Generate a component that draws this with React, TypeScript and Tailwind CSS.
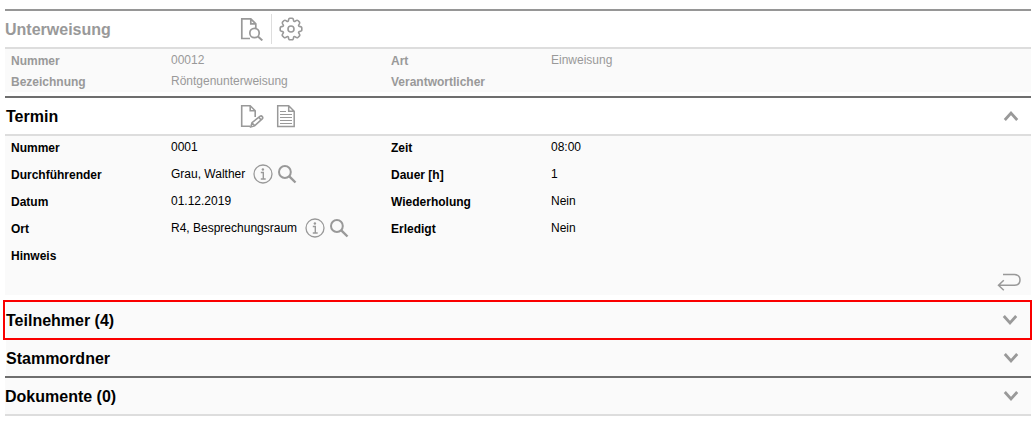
import { useState } from 'react'
import type { ReactNode } from 'react'

const IconButton = ({ label, children, className = '' }: { label: string; children: ReactNode; className?: string }) => (
    <button type="button" aria-label={label} className={'flex shrink-0 text-[#999] ' + className}>
        {children}
    </button>
)

const PreviewIcon = () => (
    <svg width="24" height="24" viewBox="0 0 24 24" fill="none" stroke="currentColor" strokeWidth="1.7">
        <path d="M10 21.5H1.8V1.8h9l5 5V11M10.8 1.8v5h5" />
        <circle cx="14.5" cy="16" r="4.7" />
        <path d="M18 19.4l4.300 4" strokeWidth="2" />
    </svg>
)

const GearIcon = () => (
    <svg width="24" height="24" viewBox="0 0 24 24" fill="none" stroke="currentColor" strokeWidth="1.6" strokeLinejoin="round">
        <path d="M9.4 3.8Q9.6 1.2 10.9 1.2h2.2Q14.4 1.2 14.6 3.8Q15.3 4.9 16.3 4.1Q18 2.7 18.9 3.5l1.6 1.6Q21.3 6 19.9 7.7Q19.1 8.7 20.2 9.4Q22.8 9.6 22.8 10.9v2.2Q22.8 14.4 20.2 14.6Q19.1 15.3 19.9 16.3Q21.3 18 20.5 18.9l-1.6 1.6Q18 21.3 16.3 19.9Q15.3 19.1 14.6 20.2Q14.4 22.8 13.1 22.8h-2.2Q9.6 22.8 9.4 20.2Q8.7 19.1 7.7 19.9Q6 21.3 5.1 20.5l-1.6-1.6Q2.7 18 4.1 16.3Q4.9 15.3 3.8 14.6Q1.2 14.4 1.2 13.1v-2.2Q1.2 9.6 3.8 9.4Q4.9 8.7 4.1 7.7Q2.7 6 3.5 5.1l1.6-1.6Q6 2.7 7.7 4.1Q8.7 4.9 9.4 3.8z" />
        <circle cx="12" cy="12" r="3" />
    </svg>
)

const EditIcon = () => (
    <svg width="24" height="24" viewBox="0 0 24 24" fill="none" stroke="currentColor" strokeWidth="1.6">
        <path d="M10 22.200H1.700V1.800h8.500l5 5V13M10.200 1.800v5h5" />
        <path d="M10.800 22.900l1.200-4.200 8.200-6.600q1.200-.6 2.200.6.800 1.200-.2 2.200l-7.600 7zM12 18.800l2.600 3M18.800 13.200l2.300 2.700" />
    </svg>
)

const DocumentIcon = () => (
    <svg width="20" height="24" viewBox="0 0 20 24" fill="none" stroke="currentColor" strokeWidth="1.5">
        <path d="M1.700 1.800h11l5.500 5.500v15.100H1.700zM12.700 1.800v5.500h5.500" />
        <path d="M4 7.500h6M4 10.500h12M4 13.500h12M4 16.500h12M4 19.500h12" strokeWidth="1" />
    </svg>
)

const InfoIcon = () => (
    <svg width="20" height="20" viewBox="0 0 20 20" fill="none" stroke="currentColor">
        <circle cx="10" cy="10" r="9" strokeWidth="1.3" />
        <circle cx="9.900" cy="5.500" r="1.200" fill="currentColor" stroke="none" />
        <path d="M7.800 8.500h2.500v6.500M7.800 15h4.900" strokeWidth="1.400" />
    </svg>
)

const SearchIcon = () => (
    <svg width="20" height="20" viewBox="0 0 20 20" fill="none" stroke="currentColor">
        <circle cx="7.900" cy="8" r="5.900" strokeWidth="2" />
        <path d="M12.300 12.300l6.200 6.200" strokeWidth="2.400" />
    </svg>
)

const ReturnIcon = () => (
    <svg width="26" height="20" viewBox="0 0 26 20" fill="none" stroke="currentColor" strokeWidth="1.500">
        <path d="M6 2.500h11.500q5.500.4 5.500 5.400t-5.500 5.400H1.500M6.800 8.200L1.500 13.300l5.300 4.900" />
    </svg>
)

const Chevron = ({ open }: { open: boolean }) => (
    <svg width="16" height="12" viewBox="0 0 16 12" fill="none" stroke="#999" strokeWidth="2.800">
        <path d={open ? 'M1.800 10L8 3l6.200 7' : 'M1.800 2L8 9l6.200-7'} />
    </svg>
)

const Field = ({ label, children }: { label: string; children?: ReactNode }) => (
    <>
        <dt className="pt-px font-bold">{label}</dt>
        <dd className="flex items-center">{children}</dd>
    </>
)

const Lookup = ({ name }: { name: string }) => (
    <>
        <span>{name}</span>
        <IconButton label={'Info ' + name} className="ml-2">
            <InfoIcon />
        </IconButton>
        <IconButton label={'Suche ' + name} className="ml-1">
            <SearchIcon />
        </IconButton>
    </>
)

const Section = ({ title, className = '' }: { title: string; className?: string }) => {
    const [open, setOpen] = useState(false)

    return (
        <h2 className={className}>
            <button
                type="button"
                aria-expanded={open}
                onClick={() => setOpen(!open)}
                className="flex h-9 w-full items-center justify-between bg-[#fafafa] pr-3 text-left font-bold"
            >
                <span className="pt-0.5">{title}</span>
                <Chevron open={open} />
            </button>
        </h2>
    )
}

const App = () => {
    const [open, setOpen] = useState(true)

    return (
        <main className="bg-white px-[5px] pt-[9px] font-['Liberation_Sans',Arial,sans-serif] text-base text-black">
            <section className="mb-1 text-[#999]">
                <div className="flex h-10 items-center border-t-2 border-b-2 border-t-[#969696] border-b-[#ddd]">
                    <h2 className="w-[235px] pt-0.5 font-bold">Unterweisung</h2>
                    <IconButton label="Vorschau">
                        <PreviewIcon />
                    </IconButton>
                    <div className="mx-[7px] h-[30px] w-px bg-[#ddd]" />
                    <IconButton label="Einstellungen">
                        <GearIcon />
                    </IconButton>
                </div>
                <dl className="grid auto-rows-[21px] grid-cols-[160px_220px_160px_1fr] bg-[#fafafa] pt-px pl-1.5 text-xs leading-[21px]">
                    <Field label="Nummer">00012</Field>
                    <Field label="Art">Einweisung</Field>
                    <Field label="Bezeichnung">Röntgenunterweisung</Field>
                    <Field label="Verantwortlicher" />
                </dl>
            </section>

            <section className="mb-[5px]">
                <div className="flex h-10 items-center border-t-2 border-b-2 border-t-[#6e6e6e] border-b-[#ddd] pr-3">
                    <h2 className="w-[235px] pt-0.5 pl-px font-bold">Termin</h2>
                    <IconButton label="Bearbeiten">
                        <EditIcon />
                    </IconButton>
                    <IconButton label="Dokument" className="ml-3">
                        <DocumentIcon />
                    </IconButton>
                    <button type="button" aria-label="Termin" aria-expanded={open} onClick={() => setOpen(!open)} className="ml-auto">
                        <Chevron open={open} />
                    </button>
                </div>
                {open && (
                    <div className="bg-[#fafafa]">
                        <dl className="grid auto-rows-[22px] grid-cols-[160px_220px_160px_1fr] gap-y-[5px] pl-1.5 text-xs leading-[22px]">
                            <Field label="Nummer">0001</Field>
                            <Field label="Zeit">08:00</Field>
                            <Field label="Durchführender">
                                <Lookup name="Grau, Walther" />
                            </Field>
                            <Field label="Dauer [h]">1</Field>
                            <Field label="Datum">01.12.2019</Field>
                            <Field label="Wiederholung">Nein</Field>
                            <Field label="Ort">
                                <Lookup name="R4, Besprechungsraum" />
                            </Field>
                            <Field label="Erledigt">Nein</Field>
                            <Field label="Hinweis" />
                        </dl>
                        <div className="flex justify-end pt-1.5 pr-2 pb-[3px]">
                            <IconButton label="Zurück">
                                <ReturnIcon />
                            </IconButton>
                        </div>
                    </div>
                )}
            </section>

            <Section title="Teilnehmer (4)" className="-mr-px -ml-0.5 border-2 border-[#fa0000] pl-px" />
            <Section title="Stammordner" className="pl-px" />
            <Section title="Dokumente (0)" className="border-t-2 border-b-2 border-t-[#6e6e6e] border-b-[#ddd]" />
        </main>
    )
}

export default App
